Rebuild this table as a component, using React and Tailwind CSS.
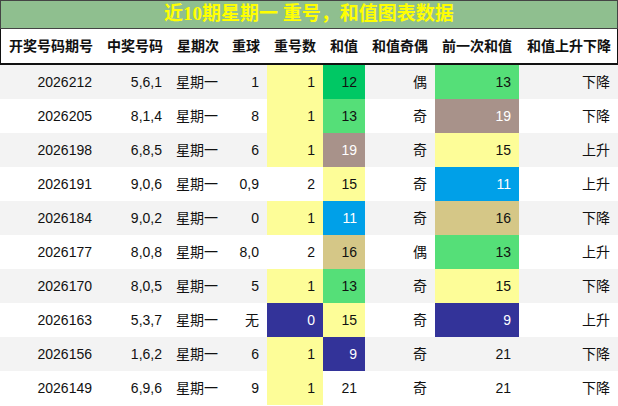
import React from "react";

const cols = "grid grid-cols-[100px_70px_56px_41px_56px_42px_70px_84px_99px]";

const heads = ["开奖号码期号", "中奖号码", "星期次", "重球", "重号数", "和值", "和值奇偶", "前一次和值", "和值上升下降"];

const Y = "bg-[#fdfd98]";
const G = "bg-[#55df78]";
const DG = "bg-[#00c864]";
const M = "bg-[#a8928a] text-white";
const B = "bg-[#00a0e8] text-white";
const K = "bg-[#d5c787]";
const N = "bg-[#333399] text-white";

// [期号, 号码, 星期, 重球, 重号数, 色, 和值, 色, 奇偶, 前一次, 色, 升降]
const rows = [
  ["2026212", "5,6,1", "星期一", "1", "1", Y, "12", DG, "偶", "13", G, "下降"],
  ["2026205", "8,1,4", "星期一", "8", "1", Y, "13", G, "奇", "19", M, "下降"],
  ["2026198", "6,8,5", "星期一", "6", "1", Y, "19", M, "奇", "15", Y, "上升"],
  ["2026191", "9,0,6", "星期一", "0,9", "2", "", "15", Y, "奇", "11", B, "上升"],
  ["2026184", "9,0,2", "星期一", "0", "1", Y, "11", B, "奇", "16", K, "下降"],
  ["2026177", "8,0,8", "星期一", "8,0", "2", "", "16", K, "偶", "13", G, "上升"],
  ["2026170", "8,0,5", "星期一", "5", "1", Y, "13", G, "奇", "15", Y, "下降"],
  ["2026163", "5,3,7", "星期一", "无", "0", N, "15", Y, "奇", "9", N, "上升"],
  ["2026156", "1,6,2", "星期一", "6", "1", Y, "9", N, "奇", "21", "", "下降"],
  ["2026149", "6,9,6", "星期一", "9", "1", Y, "21", "", "奇", "21", "", "下降"],
];

function Cell({ children, className = "" }) {
  return <div className={`flex items-center justify-end pr-2 ${className}`}>{children}</div>;
}

export default function App() {
  return (
    <div className="w-[618px] h-[406px] bg-white text-[14px] text-[#111] font-['Liberation_Sans','Noto_Sans_CJK_SC',sans-serif]">
      {/* title */}
      <div className="h-[29px] bg-[#8fbf8f] border border-[#444] flex items-center justify-center">
        <span className="text-[19px] font-bold text-[#ffff00] font-['Liberation_Serif','Noto_Sans_CJK_SC',serif]">
          近10期星期一 重号，和值图表数据
        </span>
      </div>

      {/* header */}
      <div className={`${cols} h-[36px] border-x border-b-2 border-[#111] font-bold`}>
        {heads.map((h) => (
          <Cell key={h}>{h}</Cell>
        ))}
      </div>

      {/* rows */}
      {rows.map((r, i) => (
        <div key={r[0]} className={`${cols} h-[34px] ${i % 2 === 0 ? "bg-[#f3f3f3]" : "bg-white"}`}>
          <Cell>{r[0]}</Cell>
          <Cell>{r[1]}</Cell>
          <Cell>{r[2]}</Cell>
          <Cell>{r[3]}</Cell>
          <Cell className={r[5]}>{r[4]}</Cell>
          <Cell className={r[7]}>{r[6]}</Cell>
          <Cell>{r[8]}</Cell>
          <Cell className={r[10]}>{r[9]}</Cell>
          <Cell>{r[11]}</Cell>
        </div>
      ))}
    </div>
  );
}
